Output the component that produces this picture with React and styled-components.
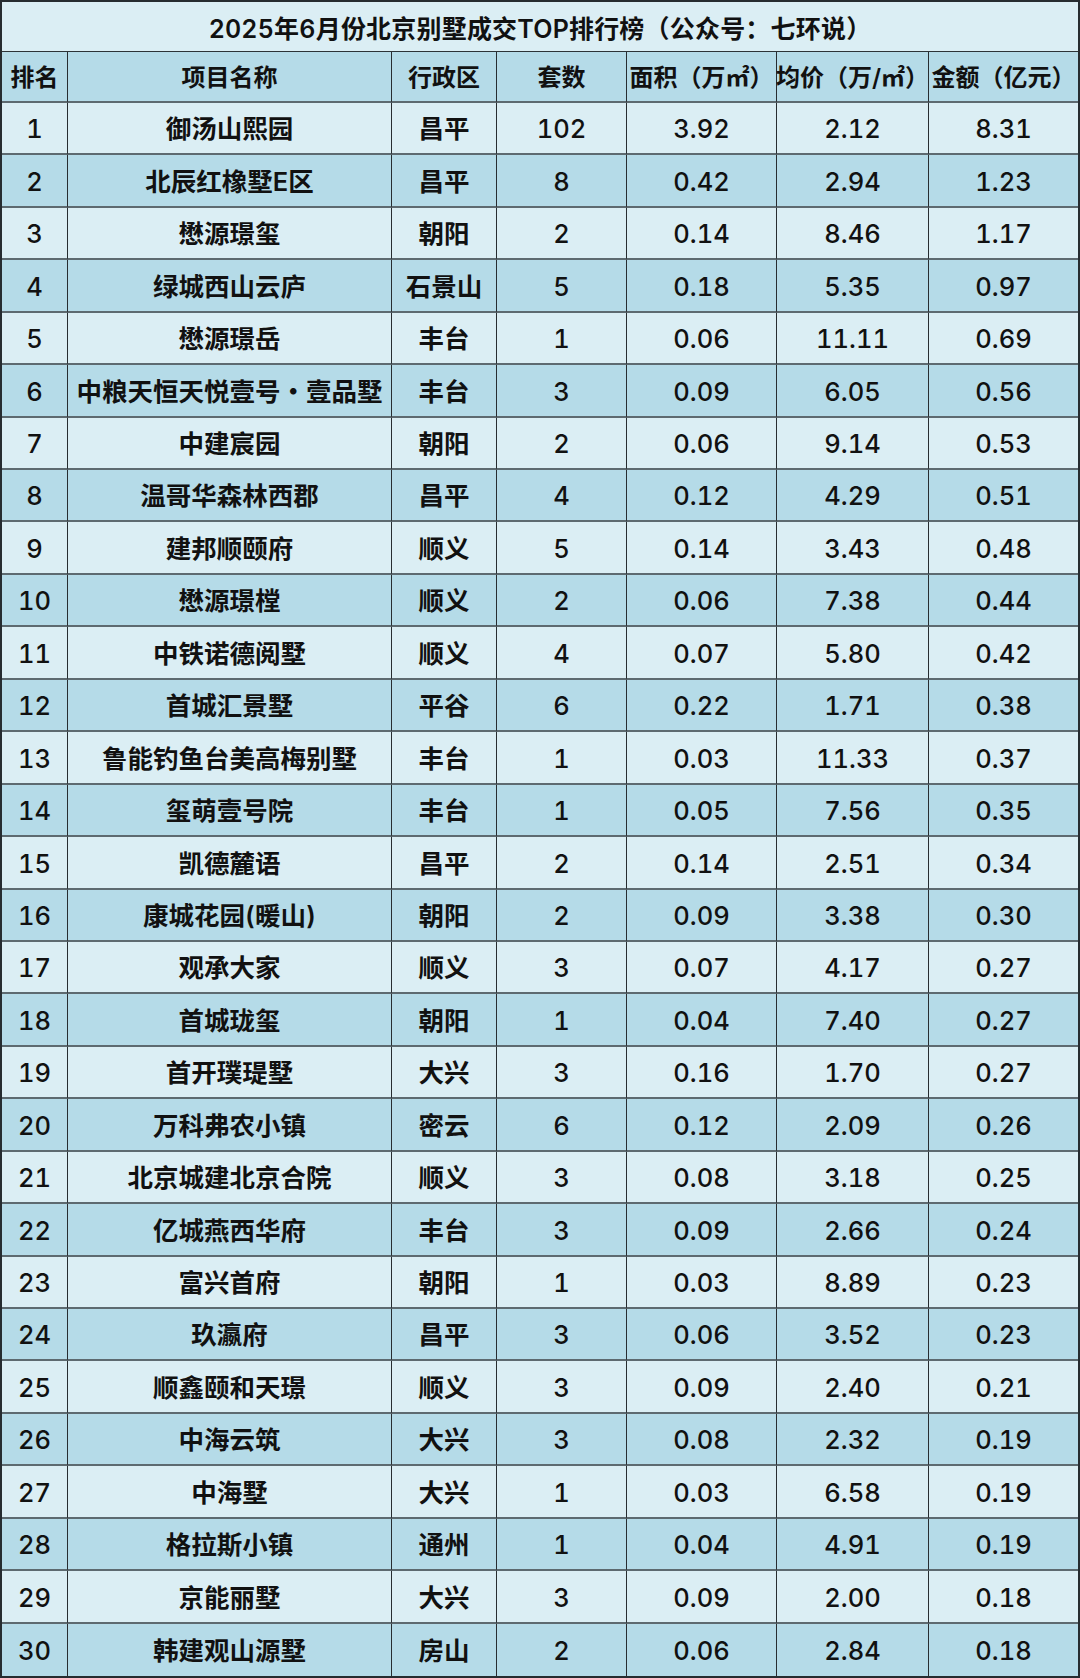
import React from "react";
import styled, { createGlobalStyle } from "styled-components";

const Global = createGlobalStyle`
  html, body { margin: 0; padding: 0; background: #dbeef4; }
  body { font-family: "Inter", "Noto Sans CJK SC", "Noto Sans", sans-serif; }
`;

const rows = [
  [1, "御汤山熙园", "昌平", "102", "3.92", "2.12", "8.31"],
  [2, "北辰红橡墅E区", "昌平", "8", "0.42", "2.94", "1.23"],
  [3, "懋源璟玺", "朝阳", "2", "0.14", "8.46", "1.17"],
  [4, "绿城西山云庐", "石景山", "5", "0.18", "5.35", "0.97"],
  [5, "懋源璟岳", "丰台", "1", "0.06", "11.11", "0.69"],
  [6, "中粮天恒天悦壹号・壹品墅", "丰台", "3", "0.09", "6.05", "0.56"],
  [7, "中建宸园", "朝阳", "2", "0.06", "9.14", "0.53"],
  [8, "温哥华森林西郡", "昌平", "4", "0.12", "4.29", "0.51"],
  [9, "建邦顺颐府", "顺义", "5", "0.14", "3.43", "0.48"],
  [10, "懋源璟樘", "顺义", "2", "0.06", "7.38", "0.44"],
  [11, "中铁诺德阅墅", "顺义", "4", "0.07", "5.80", "0.42"],
  [12, "首城汇景墅", "平谷", "6", "0.22", "1.71", "0.38"],
  [13, "鲁能钓鱼台美高梅别墅", "丰台", "1", "0.03", "11.33", "0.37"],
  [14, "玺萌壹号院", "丰台", "1", "0.05", "7.56", "0.35"],
  [15, "凯德麓语", "昌平", "2", "0.14", "2.51", "0.34"],
  [16, "康城花园(暖山)", "朝阳", "2", "0.09", "3.38", "0.30"],
  [17, "观承大家", "顺义", "3", "0.07", "4.17", "0.27"],
  [18, "首城珑玺", "朝阳", "1", "0.04", "7.40", "0.27"],
  [19, "首开璞瑅墅", "大兴", "3", "0.16", "1.70", "0.27"],
  [20, "万科弗农小镇", "密云", "6", "0.12", "2.09", "0.26"],
  [21, "北京城建北京合院", "顺义", "3", "0.08", "3.18", "0.25"],
  [22, "亿城燕西华府", "丰台", "3", "0.09", "2.66", "0.24"],
  [23, "富兴首府", "朝阳", "1", "0.03", "8.89", "0.23"],
  [24, "玖瀛府", "昌平", "3", "0.06", "3.52", "0.23"],
  [25, "顺鑫颐和天璟", "顺义", "3", "0.09", "2.40", "0.21"],
  [26, "中海云筑", "大兴", "3", "0.08", "2.32", "0.19"],
  [27, "中海墅", "大兴", "1", "0.03", "6.58", "0.19"],
  [28, "格拉斯小镇", "通州", "1", "0.04", "4.91", "0.19"],
  [29, "京能丽墅", "大兴", "3", "0.09", "2.00", "0.18"],
  [30, "韩建观山源墅", "房山", "2", "0.06", "2.84", "0.18"],
];

const headers = ["排名", "项目名称", "行政区", "套数", "面积（万㎡）", "均价（万/㎡）", "金额（亿元）"];
const numericCols = new Set([0, 3, 4, 5, 6]);

const LIGHT = "#dbeef4";
const DARK = "#b5dbe8";

const Sheet = styled.div`
  box-sizing: border-box;
  width: 1080px;
  height: 1678px;
  border: 2px solid #262c30;
  display: grid;
  grid-template-columns: 66px 324px 105px 130px 150px 152px 1fr;
  grid-template-rows: 50px 51px repeat(30, 1fr);
  color: #111;
  overflow: hidden;
`;

const Title = styled.div`
  grid-column: 1 / -1;
  display: flex;
  align-items: center;
  justify-content: center;
  background: ${LIGHT};
  border-bottom: 1.5px solid #2c3337;
  font-size: 25px;
  font-weight: 600;
  letter-spacing: 0.2px;
  font-variant-numeric: tabular-nums;
`;

const Cell = styled.div`
  display: flex;
  align-items: center;
  justify-content: center;
  white-space: nowrap;
  background: ${(p) => (p.$tone === "dark" ? DARK : LIGHT)};
  border-right: ${(p) => (p.$last ? "none" : "1.5px solid #272d31")};
  border-bottom: ${(p) => (p.$bottom ? "none" : "2px solid #5d6a70")};
  font-size: ${(p) => (p.$head ? "24px" : "25.5px")};
  font-weight: ${(p) => (p.$num ? 500 : 600)};
  font-variant-numeric: tabular-nums;
  line-height: 1;
  padding-top: 2px;
`;

export default function App() {
  return (
    <>
      <Global />
      <Sheet>
        <Title>2025年6月份北京别墅成交TOP排行榜（公众号：七环说）</Title>
        {headers.map((h, i) => (
          <Cell key={h} $head $tone="dark" $last={i === headers.length - 1}>
            {h}
          </Cell>
        ))}
        {rows.map((r, ri) =>
          r.map((v, ci) => (
            <Cell
              key={`${ri}-${ci}`}
              $tone={ri % 2 === 0 ? "light" : "dark"}
              $num={numericCols.has(ci)}
              $last={ci === r.length - 1}
              $bottom={ri === rows.length - 1}
            >
              {v}
            </Cell>
          ))
        )}
      </Sheet>
    </>
  );
}
